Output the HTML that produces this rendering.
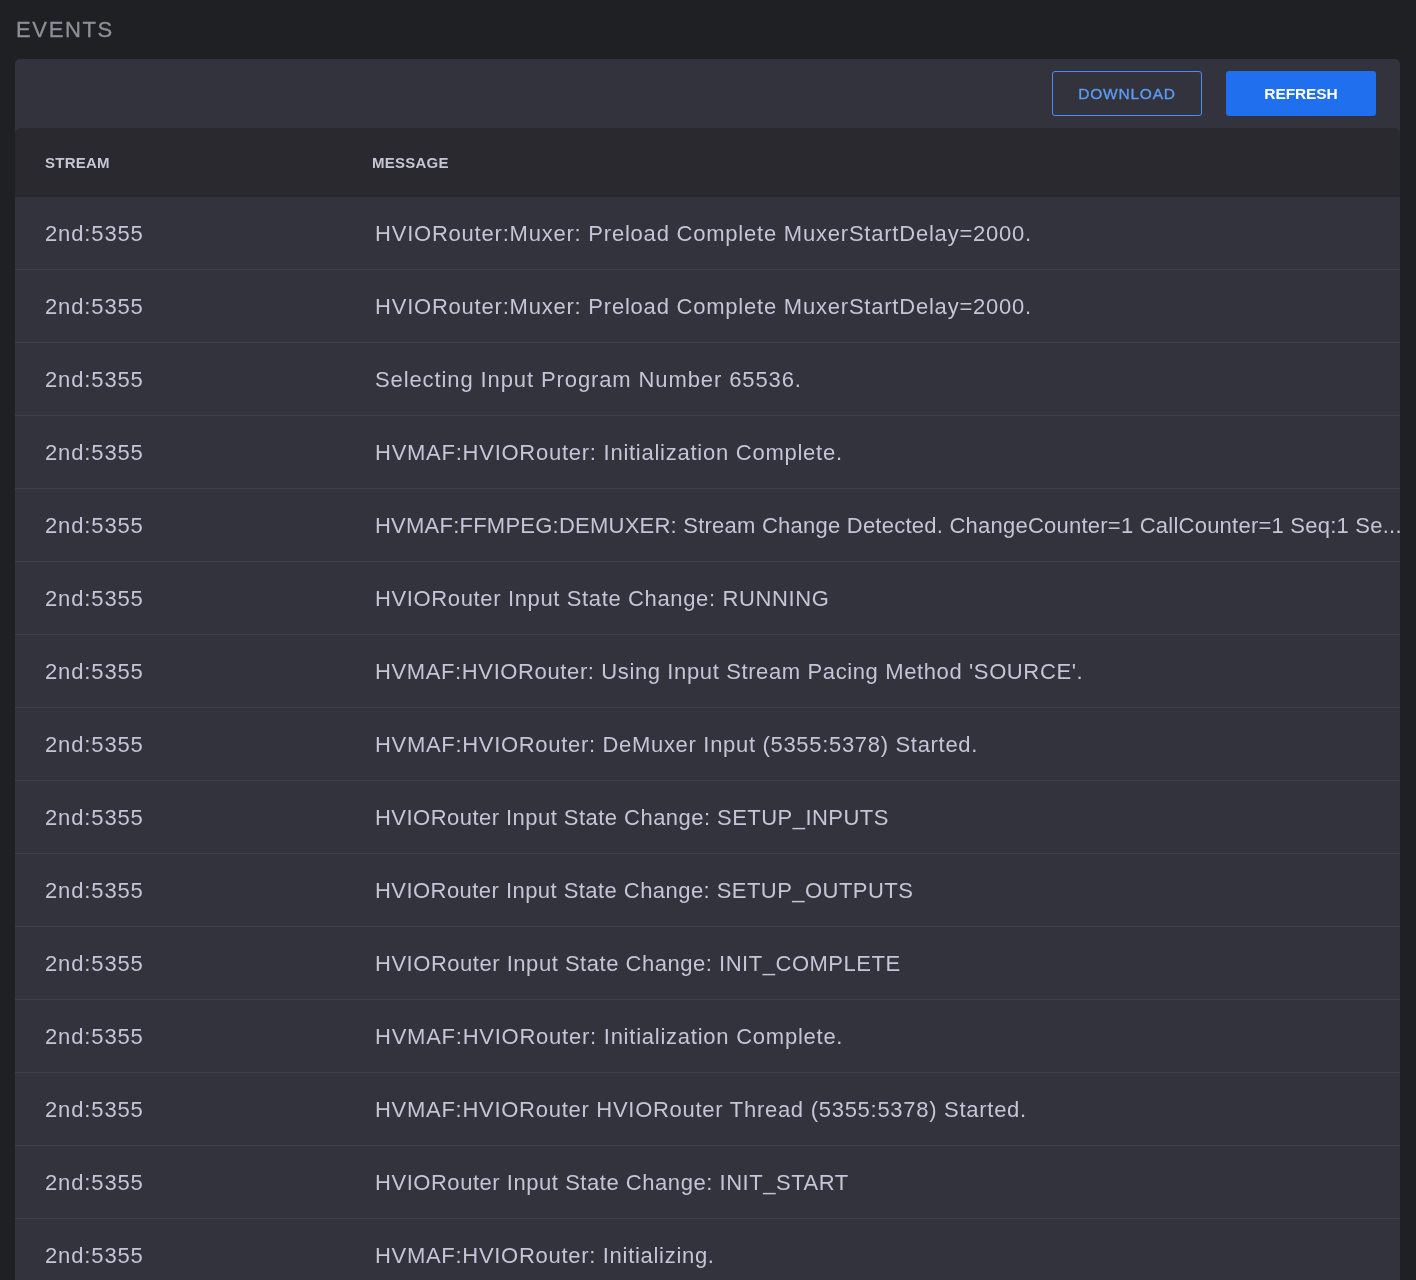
<!DOCTYPE html>
<html><head><meta charset="utf-8">
<style>
*{box-sizing:border-box;margin:0;padding:0}
html,body{width:1416px;height:1280px;overflow:hidden;background:#1f2023;font-family:"Liberation Sans",sans-serif;-webkit-font-smoothing:antialiased}
.title{will-change:transform;position:absolute;left:16px;top:18px;font-size:22px;line-height:24px;color:#8f8f9b;letter-spacing:1.65px;-webkit-text-stroke:0.3px #8f8f9b}
.panel{will-change:transform;position:absolute;left:15px;top:59px;width:1385px;height:1300px;background:#33333d;border-radius:5px 5px 0 0}
.btn{position:absolute;top:12px;height:45px;width:150px;border-radius:3px;font-size:15px;line-height:45px;text-align:center}
.dl{left:1037px;border:1px solid #4a8ff0;color:#5c9cf5;font-size:15.5px;line-height:43px;letter-spacing:0.8px;-webkit-text-stroke:0.35px #5c9cf5}
.rf{left:1211px;background:#1f6fee;color:#fff;font-weight:bold;font-size:15.5px;line-height:45px;letter-spacing:-0.1px}
.thead{position:absolute;left:0;top:69px;width:1385px;height:69px;background:#29292f;border-radius:6px 6px 0 0}
.th{position:absolute;top:0;line-height:69px;font-size:15px;font-weight:bold;color:#c6c6d4;letter-spacing:0.25px}
.rows{position:absolute;left:0;top:138px;width:1385px}
.row{position:relative;height:73px;border-bottom:1px solid #40404a}
.c1,.c2{position:absolute;top:1px;line-height:72px;font-size:22px;color:#c4c5d8;white-space:nowrap}
.c1{left:30px;letter-spacing:0.87px}
.c2{left:360px}
</style></head><body>
<div class="title">EVENTS</div>
<div class="panel">
  <div class="btn dl">DOWNLOAD</div>
  <div class="btn rf">REFRESH</div>
  <div class="thead">
    <div class="th" style="left:30px">STREAM</div>
    <div class="th" style="left:357px">MESSAGE</div>
  </div>
  <div class="rows">
    <div class="row"><span class="c1">2nd:5355</span><span class="c2" style="letter-spacing:0.782px">HVIORouter:Muxer: Preload Complete MuxerStartDelay=2000.</span></div>
    <div class="row"><span class="c1">2nd:5355</span><span class="c2" style="letter-spacing:0.782px">HVIORouter:Muxer: Preload Complete MuxerStartDelay=2000.</span></div>
    <div class="row"><span class="c1">2nd:5355</span><span class="c2" style="letter-spacing:0.894px">Selecting Input Program Number 65536.</span></div>
    <div class="row"><span class="c1">2nd:5355</span><span class="c2" style="letter-spacing:0.744px">HVMAF:HVIORouter: Initialization Complete.</span></div>
    <div class="row"><span class="c1">2nd:5355</span><span class="c2" style="letter-spacing:0.235px">HVMAF:FFMPEG:DEMUXER: Stream Change Detected. ChangeCounter=1 CallCounter=1 Seq:1 Se...</span></div>
    <div class="row"><span class="c1">2nd:5355</span><span class="c2" style="letter-spacing:0.635px">HVIORouter Input State Change: RUNNING</span></div>
    <div class="row"><span class="c1">2nd:5355</span><span class="c2" style="letter-spacing:0.619px">HVMAF:HVIORouter: Using Input Stream Pacing Method 'SOURCE'.</span></div>
    <div class="row"><span class="c1">2nd:5355</span><span class="c2" style="letter-spacing:0.686px">HVMAF:HVIORouter: DeMuxer Input (5355:5378) Started.</span></div>
    <div class="row"><span class="c1">2nd:5355</span><span class="c2" style="letter-spacing:0.462px">HVIORouter Input State Change: SETUP_INPUTS</span></div>
    <div class="row"><span class="c1">2nd:5355</span><span class="c2" style="letter-spacing:0.451px">HVIORouter Input State Change: SETUP_OUTPUTS</span></div>
    <div class="row"><span class="c1">2nd:5355</span><span class="c2" style="letter-spacing:0.526px">HVIORouter Input State Change: INIT_COMPLETE</span></div>
    <div class="row"><span class="c1">2nd:5355</span><span class="c2" style="letter-spacing:0.756px">HVMAF:HVIORouter: Initialization Complete.</span></div>
    <div class="row"><span class="c1">2nd:5355</span><span class="c2" style="letter-spacing:0.722px">HVMAF:HVIORouter HVIORouter Thread (5355:5378) Started.</span></div>
    <div class="row"><span class="c1">2nd:5355</span><span class="c2" style="letter-spacing:0.54px">HVIORouter Input State Change: INIT_START</span></div>
    <div class="row"><span class="c1">2nd:5355</span><span class="c2" style="letter-spacing:0.703px">HVMAF:HVIORouter: Initializing.</span></div>
  </div>
</div>
</body></html>
